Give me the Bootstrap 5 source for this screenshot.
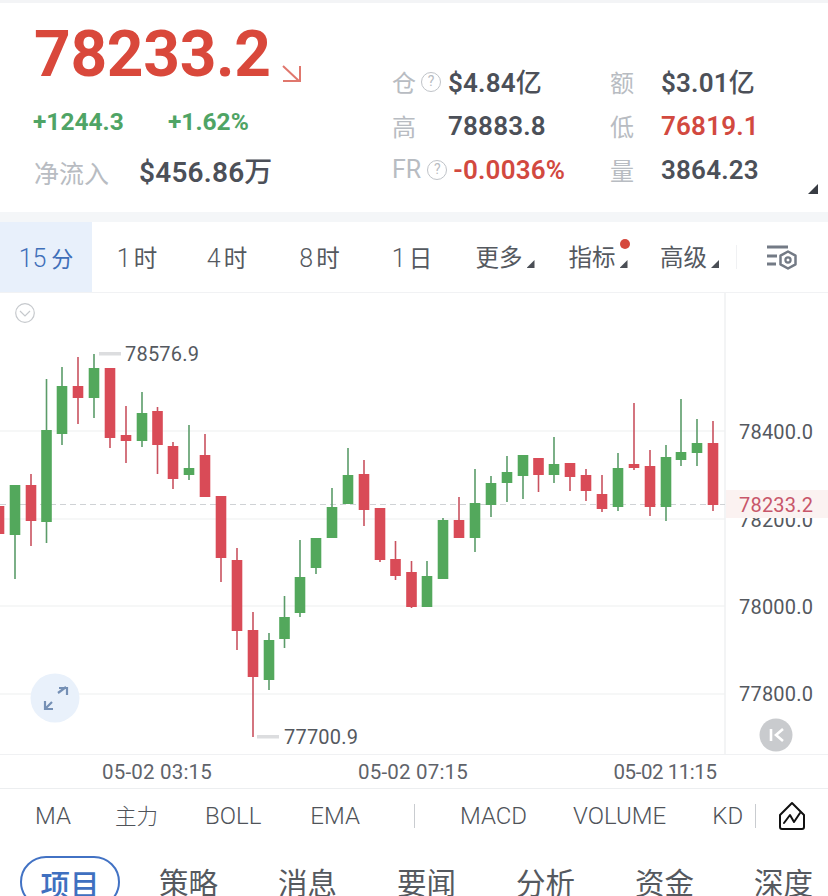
<!DOCTYPE html>
<html lang="zh-CN">
<head>
    <meta charset="UTF-8">
    <title>BTC 行情</title>
    <link href="https://cdn.jsdelivr.net/npm/bootstrap@5.3.0/dist/css/bootstrap.min.css" rel="stylesheet">
    <style>
        html, body { height: 896px; overflow: hidden; }
        body { font-family: Roboto, "Noto Sans CJK SC", sans-serif; color: #53575e; background: #fff; }
        .cjk { font-family: "Noto Sans CJK SC", sans-serif; }

        /* quote header */
        .quote-head { height: 212px; border-top: 3px solid #f3f4f6; }
        .quote-left { width: 392px; padding: 22px 0 0 34px; }
        .price-main { font-size: 64px; line-height: 60px; font-weight: 700; color: #d9483b; letter-spacing: -.3px; }
        .price-arrow { margin: 39px 0 0 10px; }
        .change-row { margin: 22px 0 0 -1px; font-size: 24.5px; line-height: 30px; font-weight: 700; color: #4fa465; }
        .change-row span:first-child { width: 135px; }
        .flow-row { margin-top: 15px; line-height: 36px; }
        .muted-label { color: #b8bcc2; font-size: 24px; font-weight: 400; }
        .flow-row .muted-label { width: 105px; font-size: 25px; }
        .flow-row .stat-value { font-size: 28px; }
        .stat-value { font-size: 26px; font-weight: 600; color: #4c5058; letter-spacing: .2px; white-space: nowrap; }
        .stat-value .cjk { font-weight: 500; }
        .stat-down { color: #d2493f; }
        .quote-stats { padding-top: 57px; }
        .stat-row { height: 44px; display: grid; grid-template-columns: 218px 51px 1fr; align-items: center; }
        .wide-label { min-width: 56px; }
        .help-dot { width: 20px; height: 20px; border: 1.5px solid #bfc3c8; border-radius: 50%; font-size: 14px; line-height: 17px; color: #b8bcc2; text-align: center; margin: 0 7px 0 5px; }
        .fr-label { font-family: Roboto, sans-serif; font-size: 25px; }
        .fr-label + .help-dot { margin: 0 6px 0 6px; }
        .corner-mark { position: absolute; right: 10px; bottom: 18px; width: 10px; height: 10px; background: #383c43; clip-path: polygon(100% 0, 100% 100%, 0 100%); }

        .gap-band { height: 10px; background: #f4f6f8; }

        /* timeframe tabs */
        .frame-tabs { height: 71px; display: grid; grid-template-columns: 92px 90px 90px 95px 90px 96px 90px 93px 1fr; border-bottom: 1px solid #f1f2f4; }
        .frame-tab { font-size: 25px; font-weight: 300; color: #55595f; position: relative; }
        .frame-tab .cjk { font-weight: 400; font-size: 23.5px; }
        .frame-label { margin-top: 3px; }
        .frame-label .cjk { margin-left: 3px; }
        .frame-tab.is-active { background: #e8f0fb; color: #3f6fb9; }
        .frame-tab.is-active .cjk { margin-left: 5px; font-size: 22px; }
        .drop-mark { width: 8px; height: 8px; margin: 14px 0 0 4px; background: #4a4e55; clip-path: polygon(100% 0, 100% 100%, 0 100%); }
        .red-dot { position: absolute; top: 17px; right: 13px; width: 10px; height: 10px; border-radius: 50%; background: #d5483c; }
        .tab-rule { border-left: 1px solid #f0f1f3; height: 24px; }
        .tune-icon { margin-left: auto; margin-right: 30px; }

        /* candle chart */
        .chart-box { height: 461px; display: block; }
        .axis-text { font-family: Roboto, sans-serif; font-size: 20px; fill: #55595f; letter-spacing: .2px; }
        .axis-text.is-last { fill: #c8566a; }

        .time-axis { height: 35px; padding-left: 29px; border-top: 1px solid #f0f1f3; border-bottom: 1px solid #eceef0; font-size: 20.5px; line-height: 35px; color: #5f636a; letter-spacing: .2px; }
        .time-axis span { width: 256px; }
        .time-axis span.tick-narrow { padding-right: 8px; letter-spacing: -.45px; }

        /* indicator strip */
        .indicator-row { height: 54px; padding-left: 35px; font-size: 24px; line-height: 1; font-weight: 300; color: #4f5359; }
        .indicator-row .cjk { font-size: 21.5px; font-weight: 300; margin-top: -3px; }
        .ind-item { margin-right: 46px; white-space: nowrap; }
        .ind-ma { margin-right: 44px; }
        .ind-main { margin-right: 47px; }
        .ind-boll { margin-right: 49px; }
        .ind-ema { margin-right: 54px; }
        .ind-kd { margin-right: 12px; }
        .ind-rule { width: 1px; height: 24px; background: #c9ccd0; }
        .ind-rule.rule-mid { margin-right: 45px; }
        .house-icon { margin-left: 22px; }

        /* section tabs */
        .section-tabs { padding: 13px 0 0 20px; }
        .section-tab { width: 119px; font-size: 29.5px; line-height: 50px; color: #55595f; text-align: center; flex: none; }
        .section-tab.first-tab { width: 100px; margin-right: 9px; color: #3f70c0; font-weight: 500; border: 2px solid #4272c4; border-radius: 26px; height: 52px; line-height: 50px; }
    </style>
</head>
<body>

    <div class="quote-head d-flex position-relative">
        <div class="quote-left">
            <div class="d-flex align-items-start">
                <span class="price-main">78233.2</span>
                <svg class="price-arrow" width="22" height="20" viewBox="0 0 22 20" fill="none" stroke="#e0776d" stroke-width="2">
                    <path d="M2 2 L18 17 M19 2 V17 H2"/>
                </svg>
            </div>
            <div class="change-row d-flex">
                <span>+1244.3</span>
                <span>+1.62%</span>
            </div>
            <div class="flow-row d-flex align-items-center">
                <span class="muted-label cjk">净流入</span>
                <span class="stat-value">$456.86<span class="cjk">万</span></span>
            </div>
        </div>
        <div class="quote-stats flex-grow-1">
            <div class="stat-row">
                <div class="d-flex align-items-center">
                    <span class="muted-label cjk">仓</span>
                    <span class="help-dot">?</span>
                    <span class="stat-value">$4.84<span class="cjk">亿</span></span>
                </div>
                <span class="muted-label cjk">额</span>
                <span class="stat-value">$3.01<span class="cjk">亿</span></span>
            </div>
            <div class="stat-row">
                <div class="d-flex align-items-center">
                    <span class="muted-label wide-label cjk">高</span>
                    <span class="stat-value">78883.8</span>
                </div>
                <span class="muted-label cjk">低</span>
                <span class="stat-value stat-down">76819.1</span>
            </div>
            <div class="stat-row">
                <div class="d-flex align-items-center">
                    <span class="muted-label fr-label">FR</span>
                    <span class="help-dot">?</span>
                    <span class="stat-value stat-down">-0.0036%</span>
                </div>
                <span class="muted-label cjk">量</span>
                <span class="stat-value">3864.23</span>
            </div>
        </div>
        <span class="corner-mark"></span>
    </div>

    <div class="gap-band"></div>

    <div class="frame-tabs">
        <div class="frame-tab is-active d-flex align-items-center justify-content-center"><span class="frame-label">15<span class="cjk">分</span></span></div>
        <div class="frame-tab d-flex align-items-center justify-content-center"><span class="frame-label">1<span class="cjk">时</span></span></div>
        <div class="frame-tab d-flex align-items-center justify-content-center"><span class="frame-label">4<span class="cjk">时</span></span></div>
        <div class="frame-tab d-flex align-items-center justify-content-center"><span class="frame-label">8<span class="cjk">时</span></span></div>
        <div class="frame-tab d-flex align-items-center justify-content-center"><span class="frame-label">1<span class="cjk">日</span></span></div>
        <div class="frame-tab d-flex align-items-center justify-content-center"><span class="cjk">更多</span><i class="drop-mark"></i></div>
        <div class="frame-tab d-flex align-items-center justify-content-center"><span class="cjk">指标</span><i class="drop-mark"></i><i class="red-dot"></i></div>
        <div class="frame-tab d-flex align-items-center justify-content-center"><span class="cjk">高级</span><i class="drop-mark"></i></div>
        <div class="d-flex align-items-center">
            <span class="tab-rule"></span>
            <svg class="tune-icon" width="32" height="28" viewBox="0 0 32 28" fill="none" stroke="#737a85">
                <path d="M1 4 H22 M1 13 H11 M1 21 H10" stroke-width="3"/>
                <path d="M22 8.5 L29.5 12.7 V21.3 L22 25.5 L14.5 21.3 V12.7 Z" stroke-width="2.5" stroke-linejoin="round"/>
                <circle cx="22" cy="17" r="2.6" stroke-width="2.2"/>
            </svg>
        </div>
    </div>

    <svg id="klineChart" class="chart-box" width="828" height="461" viewBox="0 293 828 461"></svg>

    <div class="time-axis d-flex text-center">
        <span>05-02 03:15</span>
        <span>05-02 07:15</span>
        <span class="tick-narrow">05-02 11:15</span>
    </div>

    <div class="indicator-row d-flex align-items-center">
        <span class="ind-item ind-ma">MA</span>
        <span class="ind-item ind-main cjk">主力</span>
        <span class="ind-item ind-boll">BOLL</span>
        <span class="ind-item ind-ema">EMA</span>
        <span class="ind-rule rule-mid"></span>
        <span class="ind-item">MACD</span>
        <span class="ind-item">VOLUME</span>
        <span class="ind-item ind-kd">KD</span>
        <span class="ind-rule"></span>
        <svg class="house-icon" width="28" height="30" viewBox="0 0 28 30" fill="none" stroke="#111" stroke-width="2" stroke-linejoin="round" stroke-linecap="round">
            <path d="M14 2 L26 14 V26 Q26 28 24 28 H4 Q2 28 2 26 V14 Z"/>
            <path d="M6 22 L12 14 L16 21 L22 12"/>
        </svg>
    </div>

    <div class="section-tabs d-flex cjk">
        <div class="section-tab first-tab">项目</div>
        <div class="section-tab">策略</div>
        <div class="section-tab">消息</div>
        <div class="section-tab">要闻</div>
        <div class="section-tab">分析</div>
        <div class="section-tab">资金</div>
        <div class="section-tab">深度</div>
    </div>

    <script src="https://cdn.jsdelivr.net/npm/bootstrap@5.3.0/dist/js/bootstrap.bundle.min.js"></script>
    <script>
        // x, wick top, body top, body bottom, wick bottom, up?
        const velas = [
            [-1, 506, 506, 534, 534, 0], [15, 485, 485, 535, 579, 1], [31, 474, 485, 521, 546, 0],
            [46.5, 379, 430, 522, 543, 1], [62, 367, 386, 434, 445, 1], [78, 357, 386, 398, 424, 0],
            [94, 354, 368, 398, 418, 1], [110, 368, 368, 438, 448, 0], [126, 406, 435, 441, 463, 0],
            [142, 392, 413, 441, 447, 1], [157.5, 407, 411, 445, 474, 0], [173, 442, 446, 479, 489, 0],
            [189, 425, 468, 475, 480, 1], [205, 434, 455, 497, 497, 0], [221, 496, 496, 558, 582, 0],
            [237, 548, 560, 631, 650, 0], [253, 612, 630, 677, 737, 0], [269, 633, 640, 680, 690, 1],
            [284.5, 596, 617, 639, 648, 1], [300, 540, 577, 613, 617, 1], [316, 538, 538, 568, 574, 1],
            [332, 488, 507, 538, 538, 1], [348, 448, 475, 504, 504, 1], [364, 460, 474, 510, 526, 0],
            [380, 508, 508, 560, 562, 0], [395.5, 541, 559, 576, 580, 0], [411.5, 561, 572, 607, 608, 0],
            [427, 561, 576, 607, 607, 1], [443, 518, 520, 579, 579, 1], [459, 497, 520, 538, 538, 0],
            [475, 469, 503, 538, 552, 1], [491, 476, 483, 505, 517, 1], [507, 456, 472, 483, 502, 1],
            [523, 455, 455, 476, 499, 1], [538.5, 458, 458, 475, 492, 0], [554, 437, 464, 475, 483, 1],
            [570, 463, 463, 477, 491, 0], [586, 469, 475, 491, 501, 0], [602, 475, 494, 509, 512, 0],
            [618, 453, 468, 507, 511, 1], [634, 403, 464, 468, 470, 0], [650, 450, 466, 507, 516, 0],
            [666, 445, 457, 507, 521, 1], [681, 399, 452, 460, 466, 1], [697, 419, 443, 453, 466, 1],
            [713, 421, 443, 505, 511, 0]
        ];

        let svg = '';

        // grid lines
        [431, 519, 606, 694].forEach(y => {
            svg += `<line x1="0" x2="725" y1="${y}" y2="${y}" stroke="#f3f4f5" stroke-width="1.5"/>`;
        });
        svg += `<line x1="725" x2="725" y1="293" y2="754" stroke="#eff0f2" stroke-width="1.5"/>`;
        svg += `<line x1="0" x2="725" y1="504.5" y2="504.5" stroke="#cfd2d5" stroke-width="1" stroke-dasharray="6 4"/>`;

        velas.forEach(([x, wt, bt, bb, wb, up]) => {
            const color = up ? '#53a85c' : '#d94b57';
            const wick = up ? '#5b9c69' : '#c9525f';
            svg += `<line x1="${x}" x2="${x}" y1="${wt}" y2="${wb}" stroke="${wick}" stroke-width="1.6"/>`;
            svg += `<rect x="${x - 5.3}" y="${bt}" width="10.6" height="${bb - bt}" fill="${color}"/>`;
        });

        // price axis
        [[439, '78400.0'], [527, '78200.0'], [614, '78000.0'], [701, '77800.0']].forEach(([y, t]) => {
            svg += `<text class="axis-text" x="739" y="${y}">${t}</text>`;
        });
        svg += `<rect x="726" y="490" width="102" height="28" fill="#fbf2f1"/>`;
        svg += `<text class="axis-text is-last" x="739" y="512">78233.2</text>`;

        // high / low marks
        svg += `<rect x="99" y="352" width="22" height="3.5" fill="#dcdddf"/>`;
        svg += `<text class="axis-text" x="125" y="361">78576.9</text>`;
        svg += `<rect x="257" y="735" width="22" height="3.5" fill="#dcdddf"/>`;
        svg += `<text class="axis-text" x="284" y="744">77700.9</text>`;

        // collapse toggle
        svg += `<circle cx="25" cy="313" r="9.3" fill="none" stroke="#c6c9cd" stroke-width="1.2"/>`;
        svg += `<path d="M20 311 L25 316 L30 311" fill="none" stroke="#c6c9cd" stroke-width="1.2"/>`;

        // fullscreen button
        svg += `<circle cx="55" cy="698" r="24.5" fill="#e9f1fb"/>`;
        svg += `<path d="M58 693 L66 687 M59 688 H67 V695 M45 709 L52 702 M45 701 V709 H53" fill="none" stroke="#7590b5" stroke-width="2.2"/>`;

        // jump to latest
        svg += `<circle cx="776" cy="735" r="16.5" fill="#c9cbce"/>`;
        svg += `<path d="M771 729 V741 M783 729 L776 735 L783 741" fill="none" stroke="#fff" stroke-width="2.6"/>`;

        document.getElementById('klineChart').innerHTML = svg;
    </script>
</body>
</html>
